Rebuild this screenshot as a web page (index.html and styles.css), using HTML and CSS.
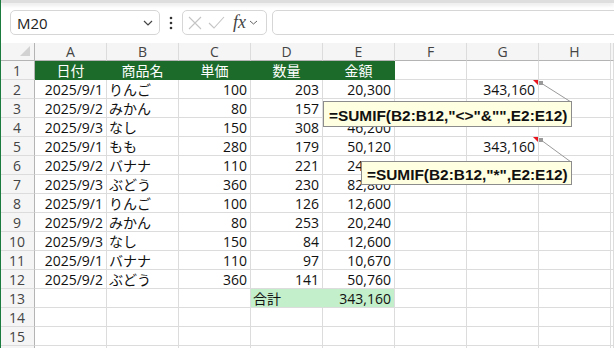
FILE: index.html
```html
<!DOCTYPE html>
<html lang="ja">
<head>
  <meta charset="UTF-8">
  <title>SUMIF - Excel</title>
  <link rel="stylesheet" href="styles.css">
</head>
<body>
  <div class="window">
    <div class="ribbon-edge"></div>

    <!-- Formula bar -->
    <div class="formula-bar">
      <div class="name-box">
        <span>M20</span>
        <svg width="10" height="6" viewBox="0 0 10 6"><polyline points="1,1 5,5 9,1" fill="none" stroke="#444" stroke-width="1.2"/></svg>
      </div>
      <div class="bar-menu">
        <svg width="4" height="14" viewBox="0 0 4 14"><circle cx="2" cy="2" r="1.3" fill="#333"/><circle cx="2" cy="7" r="1.3" fill="#333"/><circle cx="2" cy="12" r="1.3" fill="#333"/></svg>
      </div>
      <div class="fx-box">
        <svg width="14" height="14" viewBox="0 0 14 14"><path d="M1 1 L13 13 M13 1 L1 13" stroke="#c4c4c4" stroke-width="1.1"/></svg>
        <svg width="17" height="14" viewBox="0 0 17 14"><polyline points="1,7 6,12 16,1" fill="none" stroke="#c4c4c4" stroke-width="1.1"/></svg>
        <span class="fx">fx</span>
        <svg width="9" height="5" viewBox="0 0 9 5"><polyline points="1,1 4.5,4 8,1" fill="none" stroke="#666" stroke-width="1"/></svg>
      </div>
      <div class="formula-input"></div>
    </div>

    <!-- Sheet -->
    <div class="sheet">
      <div class="corner"><svg width="12" height="12" viewBox="0 0 12 12"><polygon points="11,1 11,11 1,11" fill="#d2d2d2"/></svg></div>
      <div class="col-head">A</div><div class="col-head">B</div><div class="col-head">C</div><div class="col-head">D</div>
      <div class="col-head">E</div><div class="col-head">F</div><div class="col-head">G</div><div class="col-head">H</div><div class="col-head"></div>

      <div class="rh">1</div>
      <div class="c hd">日付</div><div class="c hd">商品名</div><div class="c hd">単価</div><div class="c hd">数量</div><div class="c hd">金額</div>
      <div class="c"></div><div class="c"></div><div class="c"></div><div class="c"></div>

      <div class="rh">2</div>
      <div class="c num">2025/9/1</div><div class="c txt">りんご</div><div class="c num">100</div><div class="c num">203</div><div class="c num">20,300</div>
      <div class="c"></div><div class="c num">343,160</div><div class="c"></div><div class="c"></div>

      <div class="rh">3</div>
      <div class="c num">2025/9/2</div><div class="c txt">みかん</div><div class="c num">80</div><div class="c num">157</div><div class="c num">12,560</div>
      <div class="c"></div><div class="c"></div><div class="c"></div><div class="c"></div>

      <div class="rh">4</div>
      <div class="c num">2025/9/3</div><div class="c txt">なし</div><div class="c num">150</div><div class="c num">308</div><div class="c num">46,200</div>
      <div class="c"></div><div class="c"></div><div class="c"></div><div class="c"></div>

      <div class="rh">5</div>
      <div class="c num">2025/9/1</div><div class="c txt">もも</div><div class="c num">280</div><div class="c num">179</div><div class="c num">50,120</div>
      <div class="c"></div><div class="c num">343,160</div><div class="c"></div><div class="c"></div>

      <div class="rh">6</div>
      <div class="c num">2025/9/2</div><div class="c txt">バナナ</div><div class="c num">110</div><div class="c num">221</div><div class="c num">24,310</div>
      <div class="c"></div><div class="c"></div><div class="c"></div><div class="c"></div>

      <div class="rh">7</div>
      <div class="c num">2025/9/3</div><div class="c txt">ぶどう</div><div class="c num">360</div><div class="c num">230</div><div class="c num">82,800</div>
      <div class="c"></div><div class="c"></div><div class="c"></div><div class="c"></div>

      <div class="rh">8</div>
      <div class="c num">2025/9/1</div><div class="c txt">りんご</div><div class="c num">100</div><div class="c num">126</div><div class="c num">12,600</div>
      <div class="c"></div><div class="c"></div><div class="c"></div><div class="c"></div>

      <div class="rh">9</div>
      <div class="c num">2025/9/2</div><div class="c txt">みかん</div><div class="c num">80</div><div class="c num">253</div><div class="c num">20,240</div>
      <div class="c"></div><div class="c"></div><div class="c"></div><div class="c"></div>

      <div class="rh">10</div>
      <div class="c num">2025/9/3</div><div class="c txt">なし</div><div class="c num">150</div><div class="c num">84</div><div class="c num">12,600</div>
      <div class="c"></div><div class="c"></div><div class="c"></div><div class="c"></div>

      <div class="rh">11</div>
      <div class="c num">2025/9/1</div><div class="c txt">バナナ</div><div class="c num">110</div><div class="c num">97</div><div class="c num">10,670</div>
      <div class="c"></div><div class="c"></div><div class="c"></div><div class="c"></div>

      <div class="rh">12</div>
      <div class="c num">2025/9/2</div><div class="c txt">ぶどう</div><div class="c num">360</div><div class="c num">141</div><div class="c num">50,760</div>
      <div class="c"></div><div class="c"></div><div class="c"></div><div class="c"></div>

      <div class="rh">13</div>
      <div class="c"></div><div class="c"></div><div class="c"></div><div class="c txt total">合計</div><div class="c num total">343,160</div>
      <div class="c"></div><div class="c"></div><div class="c"></div><div class="c"></div>

      <div class="rh">14</div>
      <div class="c"></div><div class="c"></div><div class="c"></div><div class="c"></div><div class="c"></div>
      <div class="c"></div><div class="c"></div><div class="c"></div><div class="c"></div>

      <div class="rh">15</div>
      <div class="c"></div><div class="c"></div><div class="c"></div><div class="c"></div><div class="c"></div>
      <div class="c"></div><div class="c"></div><div class="c"></div><div class="c"></div>

      <div class="rh"></div>
      <div class="c"></div><div class="c"></div><div class="c"></div><div class="c"></div><div class="c"></div>
      <div class="c"></div><div class="c"></div><div class="c"></div><div class="c"></div>
    </div>

    <!-- Comment indicators and leader lines -->
    <svg class="callouts" width="614" height="348" viewBox="0 0 614 348">
      <polygon points="533,80 538,80 538,85" fill="#e8141e"/>
      <polygon points="533,137 538,137 538,142" fill="#e8141e"/>
      <line x1="541" y1="83" x2="571" y2="102" stroke="#9a9a9a" stroke-width="1"/>
      <line x1="541" y1="140" x2="571" y2="162" stroke="#9a9a9a" stroke-width="1"/>
      <rect x="539" y="81" width="4" height="4" fill="#9a9a9a"/>
      <rect x="539" y="138" width="4" height="4" fill="#9a9a9a"/>
    </svg>

    <div class="comment comment-1">=SUMIF(B2:B12,"&lt;&gt;"&amp;"",E2:E12)</div>
    <div class="comment comment-2">=SUMIF(B2:B12,"*",E2:E12)</div>
  </div>
</body>
</html>
```

FILE: styles.css
```css
body {
    margin: 0;
    font-family: "Open Sans", "Noto Sans CJK JP", sans-serif;
    background-color: #fff;
}

.window {
    position: relative;
    width: 614px;
    height: 348px;
    overflow: hidden;
    background-color: #fff;
}

/* green window edge */
.window::before {
    content: "";
    position: absolute;
    left: 0;
    top: 0;
    bottom: 0;
    width: 1px;
    background-color: #1b7a3e;
    z-index: 5;
}

.ribbon-edge {
    height: 3px;
    background-color: #dedede;
    box-shadow: 0 2px 4px rgba(0, 0, 0, 0.12);
}

/* Formula bar */
.formula-bar {
    display: flex;
    height: 25px;
    padding: 7px 0 8px 10px;
}

.name-box {
    width: 150px;
    box-sizing: border-box;
    border: 1px solid #d6d6d6;
    border-radius: 5px;
    display: flex;
    align-items: center;
    justify-content: space-between;
    padding: 0 6px 0 6px;
    font-size: 15px;
    color: #222;
}

.bar-menu {
    width: 22px;
    display: flex;
    align-items: center;
    justify-content: center;
}

.fx-box {
    width: 85px;
    box-sizing: border-box;
    border: 1px solid #d6d6d6;
    border-radius: 5px;
    display: flex;
    align-items: center;
    gap: 6px;
    padding: 0 4px 0 5px;
}

.fx {
    font-family: "Liberation Serif", serif;
    font-style: italic;
    font-size: 18px;
    color: #444;
    margin-left: 2px;
    margin-right: -3px;
}

.formula-input {
    flex: 1;
    margin-left: 5px;
    margin-right: -8px;
    border: 1px solid #d6d6d6;
    border-radius: 5px;
}

/* Sheet grid */
.sheet {
    display: grid;
    grid-template-columns: 35px repeat(8, 72px) 1fr;
    grid-template-rows: 18px repeat(16, 19px);
    font-size: 14px;
}

.sheet > div {
    box-sizing: border-box;
    white-space: nowrap;
    overflow: hidden;
}

.corner {
    background-color: #f5f5f5;
    border-right: 1px solid #b4b4b4;
    border-bottom: 1px solid #b4b4b4;
    display: flex;
    align-items: flex-end;
    justify-content: flex-end;
    padding: 0 3px 3px 0;
}

.col-head {
    background-color: #f5f5f5;
    border-right: 1px solid #dcdcdc;
    border-bottom: 1px solid #b4b4b4;
    text-align: center;
    line-height: 17px;
    color: #444;
}

.rh {
    background-color: #f5f5f5;
    border-right: 1px solid #b4b4b4;
    border-bottom: 1px solid #dcdcdc;
    text-align: center;
    line-height: 16px;
    padding-top: 2px;
    color: #444;
}

.c {
    border-right: 1px solid #dcdcdc;
    border-bottom: 1px solid #dcdcdc;
    line-height: 16px;
    padding-top: 2px;
    color: #111;
}

.num {
    text-align: right;
    padding-right: 3px;
}

.txt {
    padding-left: 2px;
}

.hd {
    background-color: #1d6b2b;
    border-color: #1d6b2b;
    color: #fff;
    text-align: center;
}

.total {
    background-color: #c4efcb;
}

.txt.total {
    border-right-color: #c4efcb;
}

/* Comments */
.callouts {
    position: absolute;
    left: 0;
    top: 0;
}

.comment {
    position: absolute;
    box-sizing: border-box;
    background-color: #ffffe1;
    border: 1px solid #8c8c8c;
    font-family: "Liberation Sans", Arial, sans-serif;
    font-weight: bold;
    font-size: 15.4px;
    color: #111;
    padding: 1px 5px 0;
    white-space: nowrap;
}

.comment-1 {
    left: 323px;
    top: 101px;
    width: 249px;
    height: 26px;
    line-height: 25px;
}

.comment-2 {
    left: 361px;
    top: 161px;
    width: 211px;
    height: 24px;
    line-height: 23px;
}
```
